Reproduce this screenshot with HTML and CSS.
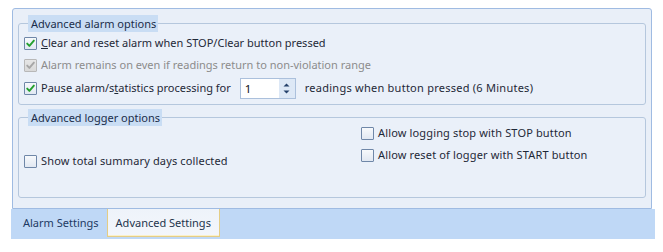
FILE: index.html
```html
<!DOCTYPE html>
<html>
<head>
<meta charset="utf-8">
<link rel="stylesheet" href="styles.css">
</head>
<body>
<div class="window">
  <div class="page">
    <fieldset class="group g1">
      <legend>Advanced alarm options</legend>
      <div class="row">
        <span class="cb checked"><svg viewBox="0 0 11 11"><path d="M2.2 5.6 L4.4 7.9 L8.9 2.6"/></svg></span>
        <span class="lbl"><u>C</u>lear and reset alarm when STOP/Clear button pressed</span>
      </div>
      <div class="row disabled">
        <span class="cb checked"><svg viewBox="0 0 11 11"><path d="M2.2 5.6 L4.4 7.9 L8.9 2.6"/></svg></span>
        <span class="lbl">Alarm remains on even if readings return to non-violation range</span>
      </div>
      <div class="row row-spin">
        <span class="cb checked"><svg viewBox="0 0 11 11"><path d="M2.2 5.6 L4.4 7.9 L8.9 2.6"/></svg></span>
        <span class="lbl">Pause alarm/s<u>t</u>atistics processing for</span>
        <span class="spin">
          <span class="val">1</span>
          <span class="btns">
            <svg viewBox="0 0 7 4"><path d="M0.5 3.5 L3.5 0.5 L6.5 3.5 Z"/></svg>
            <svg viewBox="0 0 7 4"><path d="M0.5 0.5 L3.5 3.5 L6.5 0.5 Z"/></svg>
          </span>
        </span>
        <span class="lbl after">readings when button pressed (6 Minutes)</span>
      </div>
    </fieldset>
    <fieldset class="group g2">
      <legend>Advanced logger options</legend>
      <div class="cols">
        <div class="col left">
          <div class="row">
            <span class="cb"></span>
            <span class="lbl">Show total summary days collected</span>
          </div>
        </div>
        <div class="col right">
          <div class="row">
            <span class="cb"></span>
            <span class="lbl">Allow logging stop with STOP button</span>
          </div>
          <div class="row">
            <span class="cb"></span>
            <span class="lbl">Allow reset of logger with START button</span>
          </div>
        </div>
      </div>
    </fieldset>
  </div>
  <div class="tabs">
    <div class="tab">Alarm Settings</div>
    <div class="tab active">Advanced Settings</div>
  </div>
</div>
</body>
</html>
```

FILE: styles.css
```css
html, body {
  margin: 0;
  padding: 0;
  background: #ffffff;
}

body {
  font-family: "Noto Sans", "DejaVu Sans", sans-serif;
  font-size: 11px;
  line-height: 16px;
  color: #1e2837;
}

.window {
  margin: 8px 0 0 11px;
  width: 644px;
}

.page {
  margin-left: 1px;
  width: 638px;
  height: 193px;
  border: 1px solid #9fbbe2;
  border-radius: 3px 3px 0 0;
  background: #e9eff8;
  padding-top: 6px;
  box-sizing: content-box;
}

.group {
  margin: 0 5px;
  border: 1px solid #b5c7dd;
  border-radius: 3px;
  padding: 1px 5px 5px 5px;
  min-width: 0;
  background: #eaf0f9;
}

.group legend {
  margin-left: 4px;
  padding: 0 2px 0 3px;
  height: 17px;
  line-height: 17px;
  background: #c9ddf4;
  color: #1b2d4a;
  font-size: 11px;
}

.row {
  display: flex;
  align-items: center;
  height: 20px;
}

.g1 .row + .row {
  margin-top: 2px;
}

.g1 .row-spin {
  height: 22px;
}

.cb {
  flex: none;
  width: 11px;
  height: 11px;
  border: 1px solid #6f87a8;
  border-radius: 1px;
  background: linear-gradient(#f7f9fc, #e1e8f2);
  margin-right: 4px;
  display: flex;
}

.cb svg {
  width: 11px;
  height: 11px;
}

.cb svg path {
  fill: none;
  stroke: #24a02e;
  stroke-width: 1.9;
  stroke-linecap: round;
  stroke-linejoin: round;
}

.disabled {
  color: #8c8c8c;
}

.disabled .cb {
  border-color: #b8b8b8;
  background: linear-gradient(#e6e6e6, #d9d9d9);
}

.disabled .cb svg path {
  stroke: #a6a6a6;
}

.lbl {
  white-space: nowrap;
}

.after {
  margin-left: 9px;
  letter-spacing: 0.25px;
}

.spin {
  display: flex;
  margin-left: 9px;
  width: 54px;
  height: 19px;
  border: 1px solid #abc0dc;
  background: #ffffff;
}

.spin .val {
  flex: 1;
  padding-left: 4px;
  line-height: 19px;
  font-size: 11.5px;
  color: #111111;
}

.spin .btns {
  width: 16px;
  display: flex;
  flex-direction: column;
  align-items: center;
  justify-content: center;
  gap: 3px;
  background: #dde8f6;
}

.spin .btns svg {
  width: 7px;
  height: 4px;
}

.spin .btns svg path {
  fill: #24406a;
}

.g1 {
  padding-bottom: 5px;
}

.g2 {
  margin-top: 4px;
  height: 87px;
  padding-top: 0;
  padding-bottom: 0;
}

.g2 .lbl {
  letter-spacing: 0.15px;
}

.cols {
  display: flex;
  height: 100%;
}

.col.left {
  width: 337px;
  display: flex;
  align-items: center;
}

.col.left .row {
  margin-top: -1px;
}

.col.right {
  margin-top: -3px;
}

.g2 .col.right .row + .row {
  margin-top: 2px;
}

.tabs {
  display: flex;
  height: 30px;
  background: #bfd8f6;
}

.tab {
  height: 28px;
  line-height: 27px;
  padding: 0 8px 0 12px;
  color: #1d3a63;
  font-size: 11px;
  box-sizing: border-box;
}

.tab.active {
  padding: 0 8px 0 8px;
  background: linear-gradient(#eef3fa, #f3f6fb);
  border: 1px solid #e4cd85;
  border-top: none;
  box-shadow: inset 0 -1px 0 #fbf0c8;
  color: #24344d;
}
```
